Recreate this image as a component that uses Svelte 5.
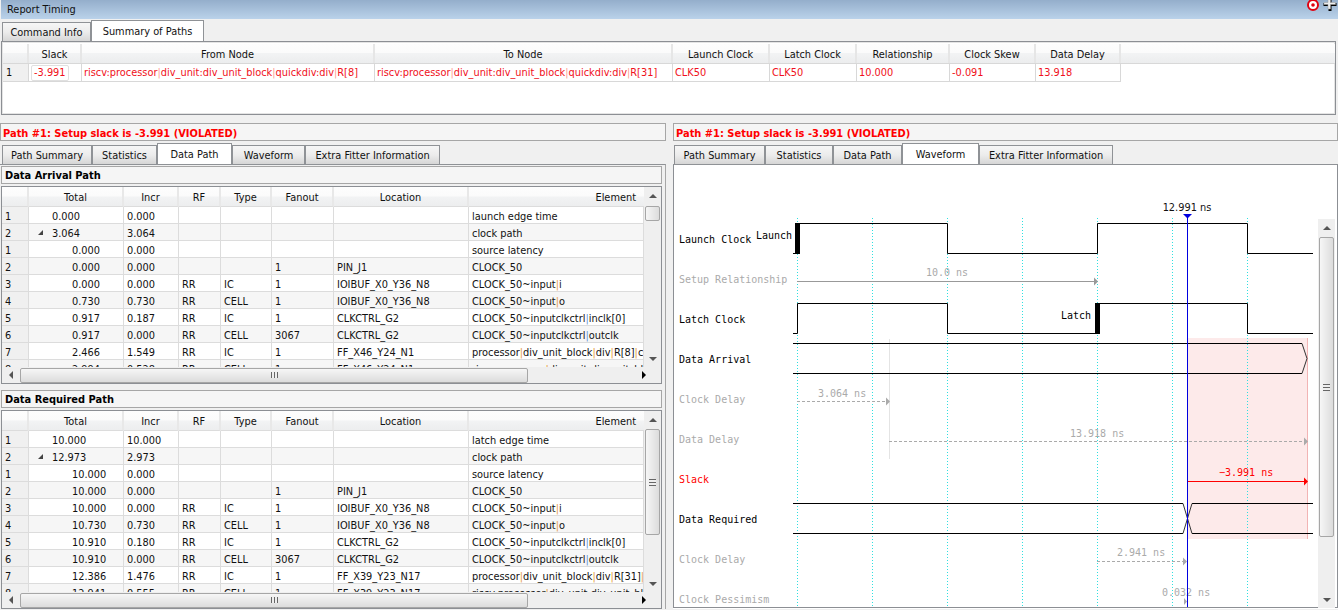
<script>
  const leftTabs = [['Path Summary',90],['Statistics',65],['Data Path',75],['Waveform',73],['Extra Fitter Information',135]];
  const rightTabs = [['Path Summary',91],['Statistics',68],['Data Path',69],['Waveform',77],['Extra Fitter Information',134]];
  const heads = ['Total','Incr','RF','Type','Fanout','Location'];
  const arrival = [
    ['1','0.000','0.000','','','','','launch edge time',0],
    ['2','3.064','3.064','','','','','clock path',0,true],
    ['1','0.000','0.000','','','','','source latency',1],
    ['2','0.000','0.000','','','1','PIN_J1','CLOCK_50',1],
    ['3','0.000','0.000','RR','IC','1','IOIBUF_X0_Y36_N8','CLOCK_50~input|i',1],
    ['4','0.730','0.730','RR','CELL','1','IOIBUF_X0_Y36_N8','CLOCK_50~input|o',1],
    ['5','0.917','0.187','RR','IC','1','CLKCTRL_G2','CLOCK_50~inputclkctrl|inclk[0]',1],
    ['6','0.917','0.000','RR','CELL','3067','CLKCTRL_G2','CLOCK_50~inputclkctrl|outclk',1],
    ['7','2.466','1.549','RR','IC','1','FF_X46_Y24_N1','processor|div_unit_block|div|R[8]|clk',1],
    ['8','2.994','0.528','RR','CELL','1','FF_X46_Y24_N1','riscv:processor|div_unit:div_unit_block',1]
  ];
  const required = [
    ['1','10.000','10.000','','','','','latch edge time',0],
    ['2','12.973','2.973','','','','','clock path',0,true],
    ['1','10.000','0.000','','','','','source latency',1],
    ['2','10.000','0.000','','','1','PIN_J1','CLOCK_50',1],
    ['3','10.000','0.000','RR','IC','1','IOIBUF_X0_Y36_N8','CLOCK_50~input|i',1],
    ['4','10.730','0.730','RR','CELL','1','IOIBUF_X0_Y36_N8','CLOCK_50~input|o',1],
    ['5','10.910','0.180','RR','IC','1','CLKCTRL_G2','CLOCK_50~inputclkctrl|inclk[0]',1],
    ['6','10.910','0.000','RR','CELL','3067','CLKCTRL_G2','CLOCK_50~inputclkctrl|outclk',1],
    ['7','12.386','1.476','RR','IC','1','FF_X39_Y23_N17','processor|div_unit_block|div|R[31]|clk',1],
    ['8','12.941','0.555','RR','CELL','1','FF_X39_Y23_N17','riscv:processor|div_unit:div_unit_block',1]
  ];
  const sumCols = [['Slack',53],['From Node',293],['To Node',298],['Launch Clock',97],['Latch Clock',87],['Relationship',93],['Clock Skew',86],['Data Delay',85]];
  const node31 = 'riscv:processor|div_unit:div_unit_block|quickdiv:div|R[31]';
  const node8 = 'riscv:processor|div_unit:div_unit_block|quickdiv:div|R[8]';
  const sumRow = ['-3.991',node8,node31,'CLK50','CLK50','10.000','-0.091','13.918'];
  const grid = [797,872,947,1022,1097,1172,1247];
  const labels = [
    ['Launch Clock',243,'k'],['Setup Relationship',283,'g'],['Latch Clock',323,'k'],['Data Arrival',363,'k'],
    ['Clock Delay',403,'g'],['Data Delay',443,'g'],['Slack',483,'r'],['Data Required',523,'k'],
    ['Clock Delay',563,'g'],['Clock Pessimism',603,'g']
  ];
</script>

{#snippet pipes(text, cls)}
  {#each text.split('|') as part, i}{#if i > 0}<span class={cls}>|</span>{/if}{part}{/each}
{/snippet}

{#snippet tabbar(tabs, active, cls)}
  <div class="tabbar {cls}">
    {#each tabs as t, i}
      <div class="tab" class:active={i === active} style="width:{t[1]}px">{t[0]}</div>
    {/each}
  </div>
{/snippet}

{#snippet table(rows, thumbClass)}
  <div class="tbl">
    <div class="tbody">
      <div class="rows">
        <div class="row head">
          <div class="c n"></div>
          {#each heads as h}<div class="c">{h}</div>{/each}
          <div class="c el">Element</div>
        </div>
        {#each rows as r, i}
          <div class="row" class:alt={i % 2 === 1}>
            <div class="c n">{r[0]}</div>
            <div class="c tot" class:child={r[8] === 1}>
              {#if r[9]}<span class="exp"></span>{/if}{r[1]}
            </div>
            <div class="c">{r[2]}</div>
            <div class="c">{r[3]}</div>
            <div class="c">{r[4]}</div>
            <div class="c">{r[5]}</div>
            <div class="c">{r[6]}</div>
            <div class="c">{@render pipes(r[7], r[7].includes('clkctrl') ? 'pb' : 'po')}</div>
          </div>
        {/each}
      </div>
      <div class="vsb">
        <div class="arrow"><span class="tri-up"></span></div>
        <div class="thumb {thumbClass}">{#if thumbClass === 'big'}<span class="hgrip"></span>{/if}</div>
        <div class="spacer"></div>
        <div class="arrow"><span class="tri-down"></span></div>
      </div>
    </div>
    <div class="hsb">
      <div class="harrow"><span class="tri-left"></span></div>
      <div class="hthumb"><span class="grip"></span></div>
      <div class="spacer"></div>
      <div class="harrow"><span class="tri-right"></span></div>
    </div>
  </div>
{/snippet}

<div class="app">
  <header class="title">
    <span>Report Timing</span>
    <div class="winicons">
      <svg width="12" height="12" viewBox="0 0 12 12"><circle cx="6" cy="6" r="5" fill="#fff" stroke="#e00010" stroke-width="2"/><circle cx="6" cy="6" r="1.8" fill="#e00010"/></svg>
      <svg width="14" height="12" viewBox="0 0 14 12"><path d="M5.500 0h3v4h5v3h-5v5h-3V7h-5V4h5z" fill="#000"/><path d="M5 0h2.500v3.500h5v2h-5V10H5V5.500H1v-2h4z" fill="#eee" stroke="#999" stroke-width=".5"/></svg>
    </div>
  </header>

  {@render tabbar([['Command Info',89],['Summary of Paths',113]], 1, 'toptabs')}

  <section class="summary">
    <div class="srow shead">
      <div class="sc sn"></div>
      {#each sumCols as c}<div class="sc" style="width:{c[1]}px">{c[0]}</div>{/each}
      <div class="sc rest"></div>
    </div>
    <div class="srow sdata">
      <div class="sc sn">1</div>
      {#each sumRow as v, i}
        <div class="sc" style="width:{sumCols[i][1]}px">
          {#if i === 0}<span class="focus">{v}</span>{:else}{@render pipes(v, 'pr')}{/if}
        </div>
      {/each}
    </div>
  </section>

  <div class="panes">
    <div class="pane">
      <div class="pathbar">Path #1: Setup slack is -3.991 (VIOLATED)</div>
      {@render tabbar(leftTabs, 2, 'subtabs')}
      <div class="datapath">
        <div class="sect">Data Arrival Path</div>
        {@render table(arrival, 'small')}
        <div class="sect second">Data Required Path</div>
        {@render table(required, 'big')}
      </div>
    </div>

    <div class="pane">
      <div class="pathbar">Path #1: Setup slack is -3.991 (VIOLATED)</div>
      {@render tabbar(rightTabs, 3, 'subtabs rt')}
      <div class="wave">
        <svg class="canvas" width="665" height="445" viewBox="673 164 665 445">
          <rect x="1187" y="338" width="120.500" height="201" fill="#fdeaea"/>
          <path d="M1307.500 338V539" stroke="#f2b4b4" fill="none"/>
          {#each grid as x}
            <path d="M{x + .5} 218V607" stroke="#2fe0e0" stroke-dasharray="1 2" fill="none"/>
          {/each}
          <path d="M889.500 339V459" stroke="#e4e4e4" fill="none"/>

          {#each labels as l}
            <text x="679" y={l[1]} class="m {l[2]}">{l[0]}</text>
          {/each}
          <text x="756" y="239" class="m k">Launch</text>
          <text x="1061" y="319" class="m k">Latch</text>

          <g class="sig">
            <path d="M793 253.500H797M800 223.500H947.500V253.500H1097.500V223.500H1247.500V253.500H1313"/>
            <path d="M793 333.500H797.500V303.500H947.500V333.500H1095M1100 303.500H1247.500V333.500H1313"/>
            <path d="M793 343.500H1302M793 373.500H1302"/>
            <path d="M793 503.500H1183M793 533.500H1183M1192 503.500H1313M1192 533.500H1313"/>
          </g>
          <rect x="795" y="223" width="5" height="31" fill="#000"/>
          <rect x="1095" y="303" width="5" height="31" fill="#000"/>
          <path d="M1302 343.500L1307 358.500L1302 373.500" stroke="#333" fill="none"/>
          <path d="M1183 503.500L1192 533.500M1183 533.500L1192 503.500" stroke="#333" fill="none"/>

          <path d="M797 281.500H1095" stroke="#999" fill="none"/>
          <path d="M1094 277.500L1098 281.500L1094 285.500z" fill="#999"/>
          <text x="926" y="276" class="m g">10.0 ns</text>

          <path d="M797 401.500H885" stroke="#aaa" stroke-dasharray="3 2" fill="none"/>
          <path d="M886 397.500L890 401.500L886 405.500z" fill="#aaa"/>
          <text x="818" y="397" class="m g">3.064 ns</text>

          <path d="M889 441.500H1304" stroke="#aaa" stroke-dasharray="3 2" fill="none"/>
          <path d="M1304 437.500L1308 441.500L1304 445.500z" fill="#aaa"/>
          <text x="1070" y="437" class="m g">13.918 ns</text>

          <path d="M1187 481.500H1304" stroke="#f00" fill="none"/>
          <path d="M1304 477.500L1308 481.500L1304 485.500z" fill="#f00"/>
          <text x="1219" y="476" class="m r">−3.991 ns</text>

          <path d="M1097 561.500H1184" stroke="#aaa" stroke-dasharray="3 2" fill="none"/>
          <path d="M1183 557.500L1187 561.500L1183 565.500z" fill="#aaa"/>
          <text x="1117" y="556" class="m g">2.941 ns</text>

          <text x="1162" y="596" class="m g">0.032 ns</text>
          <path d="M1184 598L1187 601.500L1184 605z" fill="#aaa"/>

          <path d="M1187.500 216V607" stroke="#0000e0" fill="none"/>
          <path d="M1183 214H1192L1187.500 218.500z" fill="#0000e0"/>
          <text x="1187" y="211" text-anchor="middle" class="ui">12.991 ns</text>
        </svg>
        <div class="wsb">
          <div class="arrow"><span class="tri-up"></span></div>
          <div class="thumb wthumb"><span class="hgrip"></span></div>
          <div class="spacer"></div>
          <div class="arrow"><span class="tri-down"></span></div>
        </div>
      </div>
    </div>
  </div>
</div>

<style>
  :global(body) { margin: 0; background: #f0f0f0; }
  .app {
    width: 1338px; height: 610px; overflow: hidden; background: #f0f0f0;
    font: 9.8px/1 "DejaVu Sans", sans-serif; color: #111;
    display: flex; flex-direction: column;
  }
  .title {
    height: 19px; flex: none; display: flex; align-items: center; justify-content: space-between;
    padding-left: 6px; background: linear-gradient(#94aecb, #bad2ea);
    margin-left: 1px;
  }
  .winicons { display: flex; gap: 4px; align-self: flex-start; margin-top: -1px; margin-right: 1px; }

  .tabbar { display: flex; flex: none; align-items: flex-end; padding-left: 2px; }
  .tabbar.rt { padding-left: 1px; }
  .toptabs { height: 22px; }
  .subtabs { height: 21px; margin-top: 2px; }
  .tab {
    box-sizing: border-box; height: 19px; flex: none; display: flex; align-items: center; justify-content: center;
    border: 1px solid #8f9296; border-bottom: 0; margin-right: 0; padding-top: 2px;
    background: linear-gradient(#f6f6f6 0, #ececec 50%, #d6d6d6 100%);
    white-space: nowrap;
  }
  .tab.active { height: 21px; background: #fff; padding-top: 1px; padding-bottom: 0; }

  .summary {
    box-sizing: border-box; flex: none; height: 74px; margin: 0 2px 0 1px; padding: 2px 0 0 1px;
    background: #fff; border: 1px solid #8c8f94; box-shadow: inset 0 0 0 1px #e4e4e4;
  }
  .srow { display: flex; }
  .shead { height: 19px; background: linear-gradient(#fdfdfd 0, #fbfbfb 45%, #f2f3f4 50%, #ecedee 100%); border-bottom: 1px solid #d8d8d8; }
  .sdata { height: 18px; }
  .sc {
    box-sizing: border-box; flex: none; display: flex; align-items: center; white-space: nowrap; overflow: hidden;
    border-right: 1px solid #d8d8d8;
  }
  .shead .sc { justify-content: center; border-right: 2px solid #e6e6e6; padding-top: 2px; }
  .shead .sc.rest { flex: 1; border: 0; }
  .sdata .sc { padding-left: 2px; padding-top: 1px; color: #f01020; border-bottom: 1px solid #d8d8d8; }
  .sdata .sc.sn { color: #111; background: #f0f0f0; padding-left: 3px; }
  .sc.sn { width: 26px; }
  .focus { border: 1px solid #e0e0e0; border-radius: 2px; padding: 2px 2px; }
  .pr { color: #ff9a90; }

  .panes { display: grid; grid-template-columns: 666px 665px; column-gap: 7px; margin-top: 8px; flex: 1; min-height: 0; }
  .pane { display: flex; flex-direction: column; min-width: 0; }
  .pathbar {
    box-sizing: border-box; height: 18px; flex: none; display: flex; align-items: center; padding: 3px 0 0 2px;
    border: 1px solid #a6a6a6; background: #f5f5f5; color: #f00; font-weight: 700; font-size: 9.9px;
  }
  .datapath {
    box-sizing: border-box; height: 445px; padding: 1px 3px 0 1px;
    border-top: 1px solid #8f9296; border-right: 1px solid #a6a6a6; display: flex; flex-direction: column;
  }
  .sect {
    box-sizing: border-box; height: 18px; flex: none; display: flex; align-items: center; padding: 2px 0 0 3px;
    border: 1px solid #a6a6a6; background: #f5f5f5; font-weight: 700; font-size: 9.9px; color: #000;
  }
  .sect.second { margin-top: 6px; }
  .tbl {
    box-sizing: border-box; height: 198px; flex: none; margin-top: 2px; display: flex; flex-direction: column;
    border: 1px solid #8c8f94; background: #fff;
  }
  .tbl:last-child { height: 199px; }
  .tbody { flex: 1; min-height: 0; display: flex; overflow: hidden; }
  .rows { flex: 1; min-width: 0; overflow: hidden; }
  .row { display: grid; grid-template-columns: 27px 95px 55px 42px 51px 62px 135px 1fr; height: 17px; background: #fff; white-space: nowrap; }
  .row.alt { background: #f6f6f6; }
  .row.head { height: 20px; background: linear-gradient(#fdfdfd 0, #fbfbfb 45%, #f2f3f4 50%, #ecedee 100%); }
  .c {
    box-sizing: border-box; display: flex; align-items: center; padding: 3px 0 0 3px; overflow: hidden; min-width: 0;
    border-right: 1px solid #dcdcdc; border-bottom: 1px solid #dcdcdc;
  }
  .c.n { background: #f0f0f0; padding-left: 3px; }
  .head .c { justify-content: center; padding: 2px 0 0; border-right: 2px solid #e8e8e8; }
  .head .c.n { background: transparent; }
  .head .c.el { justify-content: flex-end; padding-right: 8px; border-right: 0; }
  .c.tot { padding-left: 23px; position: relative; }
  .c.tot.child { padding-left: 43px; }
  .exp {
    position: absolute; left: 9px; top: 6px; width: 0; height: 0;
    border-left: 5px solid transparent; border-bottom: 5px solid #444;
  }
  .po { color: #e69a3c; }
  .pb { color: #5f94d8; }

  .vsb, .wsb { flex: none; width: 17px; background: #efefef; display: flex; flex-direction: column; align-items: center; }
  .arrow { width: 100%; height: 17px; flex: none; display: flex; align-items: center; justify-content: center; }
  .tri-up { width: 0; height: 0; border: 4px solid transparent; border-top: 0; border-bottom: 4px solid #555; }
  .tri-down { width: 0; height: 0; border: 4px solid transparent; border-bottom: 0; border-top: 4px solid #555; }
  .tri-left { width: 0; height: 0; border: 4px solid transparent; border-left: 0; border-right: 4px solid #555; }
  .tri-right { width: 0; height: 0; border: 4px solid transparent; border-right: 0; border-left: 4px solid #000; }
  .spacer { flex: 1; }
  .thumb {
    box-sizing: border-box; width: 15px; flex: none; border: 1px solid #a6a6a6; border-radius: 2px;
    background: linear-gradient(90deg, #f6f6f6, #dcdcdc);
    display: flex; align-items: center; justify-content: center;
  }
  .thumb.small { height: 15px; margin-top: 2px; }
  .thumb.big { height: 106px; margin-top: 1px; }
  .wsb { position: absolute; right: 3px; top: 54px; bottom: 1px; }
  .thumb.wthumb { height: 300px; margin-top: 1px; }
  .hgrip { width: 7px; height: 7px; background: repeating-linear-gradient(#666 0 1px, #eee 1px 3px); }
  .hsb { height: 16px; flex: none; display: flex; align-items: center; background: #efefef; }
  .harrow { width: 18px; flex: none; display: flex; align-items: center; justify-content: center; }
  .hthumb {
    box-sizing: border-box; width: 508px; height: 15px; flex: none; border: 1px solid #a6a6a6; border-radius: 2px;
    background: linear-gradient(#f6f6f6, #dcdcdc); display: flex; align-items: center; justify-content: center;
  }
  .grip { width: 7px; height: 6px; background: repeating-linear-gradient(90deg, #666 0 1px, #eee 1px 3px); }
  .hsb .harrow:last-child { width: 34px; }

  .wave {
    position: relative; box-sizing: border-box; height: 445px; background: #fff; margin-top: 0;
    border-top: 1px solid #8f9296; overflow: hidden;
  }
  .wave::before {
    content: ""; position: absolute; inset: 0 0 1px 0; border: 1px solid #8c8f94; border-top: 0; pointer-events: none;
  }
  .canvas { display: block; margin-top: -1px; }
  .m { font: 10px "DejaVu Sans Mono", monospace; }
  .ui { font: 9.8px "DejaVu Sans", sans-serif; fill: #111; }
  .k { fill: #000; }
  .g { fill: #aaa; }
  .r { fill: #f00; }
  .sig path { fill: none; stroke: #000; }
</style>
